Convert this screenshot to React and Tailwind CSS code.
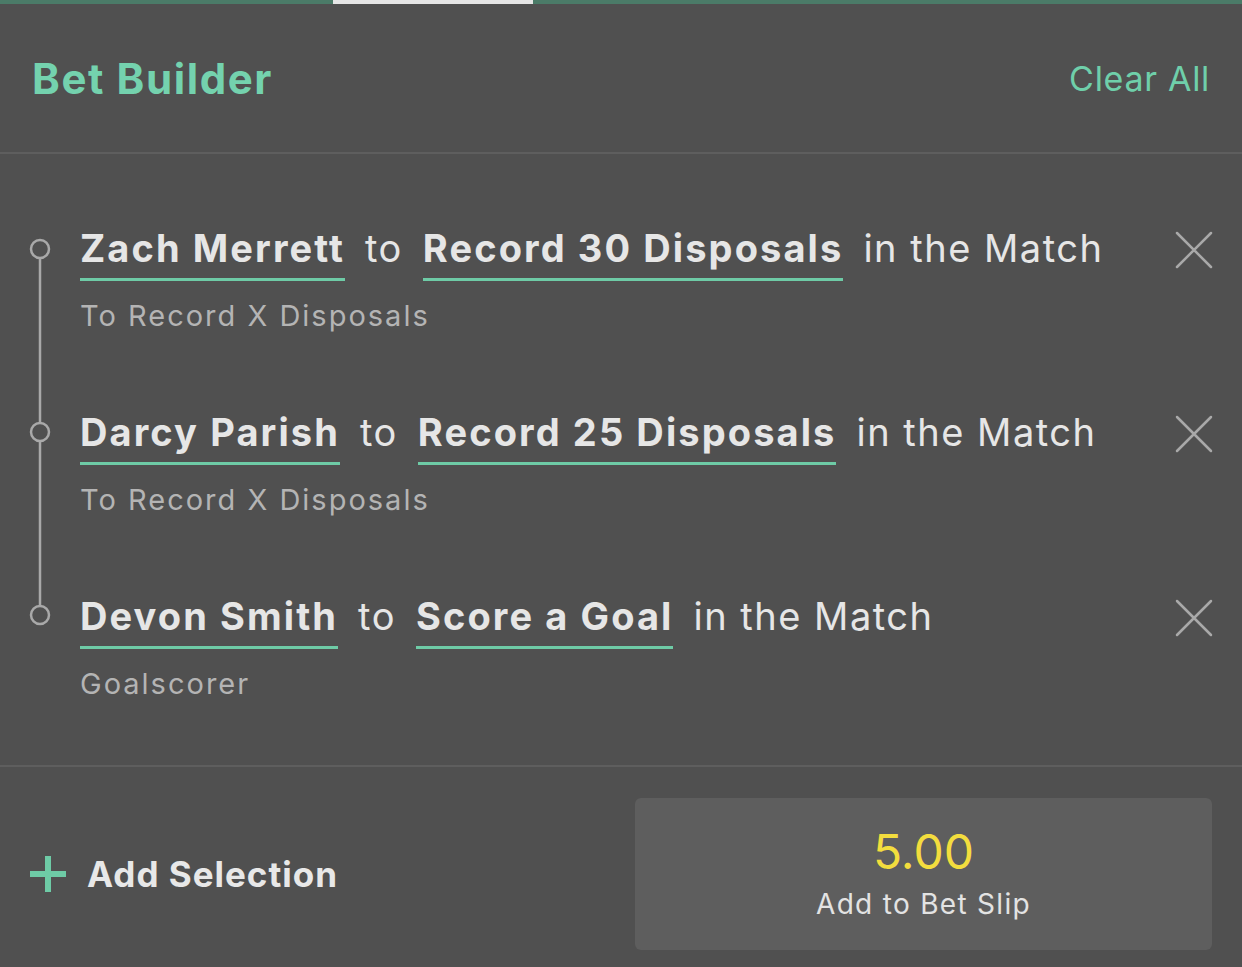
import React from 'react';

const legs = [
  { player: 'Zach Merrett', market: 'Record 30 Disposals', type: 'To Record X Disposals' },
  { player: 'Darcy Parish', market: 'Record 25 Disposals', type: 'To Record X Disposals' },
  { player: 'Devon Smith', market: 'Score a Goal', type: 'Goalscorer' },
];

const CloseIcon = () => (
  <svg width="40" height="40" viewBox="0 0 40 40" className="shrink-0">
    <path d="M3 3 L37 37 M37 3 L3 37" stroke="#a9a9a9" strokeWidth="2.5" strokeLinecap="round" />
  </svg>
);

const Leg = ({ player, market, type }) => (
  <div className="flex items-start justify-between pl-[80px] pr-[28px]">
    <div className="flex flex-col">
      <div className="flex items-start gap-[20px] text-[38px] leading-[48px] text-[#e6e6e6]">
        <span className="font-bold tracking-[2.1px] pb-[6px] border-b-[3px] border-[#6ecba6]">{player}</span>
        <span className="tracking-[1.5px]">to</span>
        <span className="font-bold tracking-[2.1px] pb-[6px] border-b-[3px] border-[#6ecba6]">{market}</span>
        <span className="tracking-[1.5px]">in the Match</span>
      </div>
      <div className="mt-[17px] text-[29px] leading-[36px] text-[#b4b4b4] tracking-[2px]">{type}</div>
    </div>
    <div className="mt-[6px]">
      <CloseIcon />
    </div>
  </div>
);

export default function App() {
  return (
    <div className="w-full h-[967px] bg-[#505050] flex flex-col overflow-hidden" style={{ fontFamily: 'Inter, "Noto Sans", sans-serif' }}>
      {/* tab indicator */}
      <div className="h-[4px] bg-[#4b7b68] flex">
        <div className="ml-[333px] w-[200px] bg-[#e6e6e6]" />
      </div>

      {/* header */}
      <div className="h-[150px] flex items-center justify-between pl-[32px] pr-[32px] border-b-[2px] border-[#5e5e5e]">
        <h1 className="text-[42px] font-bold text-[#74d2ae] tracking-[1.6px]">Bet Builder</h1>
        <button className="text-[34px] text-[#6fcfaa] tracking-[0.7px]">Clear All</button>
      </div>

      {/* selections */}
      <div className="relative flex flex-col gap-[74px] pt-[70px] pb-[63px] border-b-[2px] border-[#5e5e5e]">
        <svg className="absolute left-0 top-0" width="80" height="610">
          <line x1="40" y1="104" x2="40" y2="452" stroke="#a9a9a9" strokeWidth="2.5" />
          {[95, 278, 461].map((y) => (
            <circle key={y} cx="40" cy={y} r="9" fill="#505050" stroke="#a9a9a9" strokeWidth="2.5" />
          ))}
        </svg>
        {legs.map((l) => (
          <Leg key={l.player} {...l} />
        ))}
      </div>

      {/* footer */}
      <div className="flex items-center justify-between pl-[30px] pr-[30px] pt-[31px]">
        <button className="flex items-center gap-[21px]">
          <svg width="36" height="36" viewBox="0 0 36 36">
            <path d="M18 0 V36 M0 18 H36" stroke="#6ecba6" strokeWidth="6" />
          </svg>
          <span className="text-[35px] font-bold text-[#e8e8e8] tracking-[1px]">Add Selection</span>
        </button>
        <button className="w-[577px] h-[152px] rounded-[6px] bg-[#5e5e5e] flex flex-col items-center justify-center">
          <span className="text-[48px] leading-[52px] text-[#f3dd3e]">5.00</span>
          <span className="mt-[8px] text-[28px] leading-[36px] text-[#e3e3e3] tracking-[1.3px]">Add to Bet Slip</span>
        </button>
      </div>
    </div>
  );
}
